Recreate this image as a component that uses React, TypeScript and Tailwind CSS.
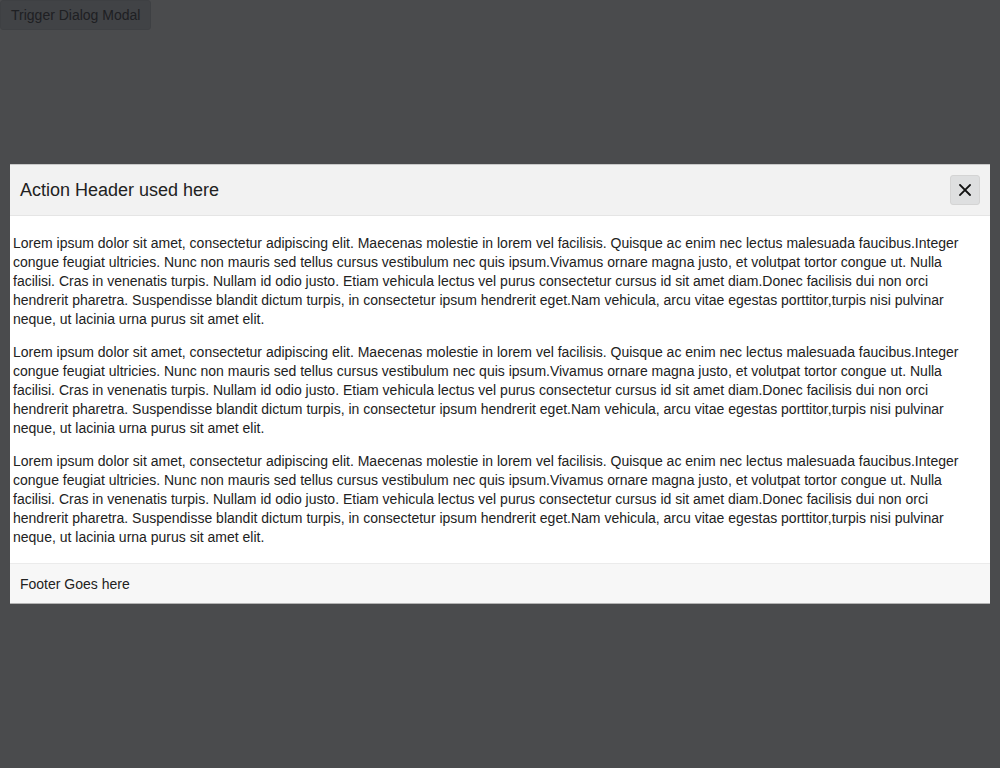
import React from "react";

const para =
  "Lorem ipsum dolor sit amet, consectetur adipiscing elit. Maecenas molestie in lorem vel facilisis. Quisque ac enim nec lectus malesuada faucibus.Integer congue feugiat ultricies. Nunc non mauris sed tellus cursus vestibulum nec quis ipsum.Vivamus ornare magna justo, et volutpat tortor congue ut. Nulla facilisi. Cras in venenatis turpis. Nullam id odio justo. Etiam vehicula lectus vel purus consectetur cursus id sit amet diam.Donec facilisis dui non orci hendrerit pharetra. Suspendisse blandit dictum turpis, in consectetur ipsum hendrerit eget.Nam vehicula, arcu vitae egestas porttitor,turpis nisi pulvinar neque, ut lacinia urna purus sit amet elit.";

export default function App() {
  return (
    <div
      className="relative w-[1000px] h-[768px] bg-white overflow-hidden"
      style={{ fontFamily: '"Liberation Sans", Arial, sans-serif' }}
    >
      <button className="h-[30px] px-[10px] text-[14px] text-[#6a6a6e] bg-[#e0e2e6] border border-[#d6d8dc] rounded-[3px]">
        Trigger Dialog Modal
      </button>
      <div className="absolute inset-0 bg-[rgba(0,1,4,0.71)] flex items-center justify-center">
        <div className="w-[980px] bg-white flex flex-col border-t border-[#c9c9c9] border-b border-b-[#b3b3b3]">
          <div className="h-[51px] bg-[#f2f2f2] border-b border-[#e5e5e5] flex items-center justify-between pl-[10px] pr-[10px]">
            <span className="text-[18px] text-[#222]">Action Header used here</span>
            <button className="w-[30px] h-[30px] rounded-[3px] bg-[#dedfe0] border border-[#d4d4d4] flex items-center justify-center">
              <svg width="12" height="12" viewBox="0 0 12 12">
                <path d="M1 1L11 11M11 1L1 11" stroke="#111" strokeWidth="1.8" strokeLinecap="square" />
              </svg>
            </button>
          </div>
          <div className="pt-[4px] pb-[2px] px-[3px] text-[14px] leading-[19px] text-[#222]">
            <p className="my-[14px]">{para}</p>
            <p className="my-[14px]">{para}</p>
            <p className="my-[14px]">{para}</p>
          </div>
          <div className="h-[40px] bg-[#f7f7f7] border-t border-[#ebebeb] flex items-center pt-[1px] px-[10px] text-[14px] text-[#222]">
            Footer Goes here
          </div>
        </div>
      </div>
    </div>
  );
}
